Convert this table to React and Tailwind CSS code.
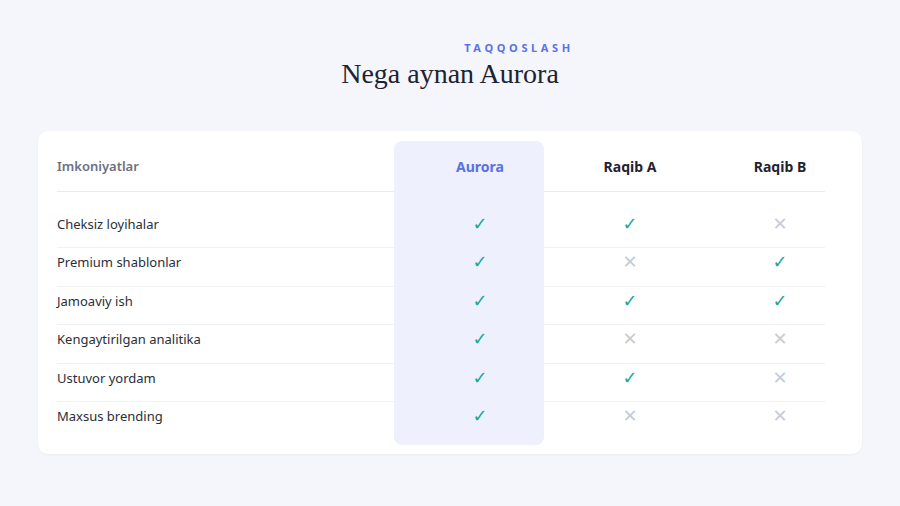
import React from "react";

const rows = [
  ["Cheksiz loyihalar", true, true, false],
  ["Premium shablonlar", true, false, true],
  ["Jamoaviy ish", true, true, true],
  ["Kengaytirilgan analitika", true, false, false],
  ["Ustuvor yordam", true, true, false],
  ["Maxsus brending", true, false, false],
];

function Mark({ ok }) {
  return (
    <div className="w-[150px] flex justify-center">
      {ok ? (
        <span className="text-[#1aa899] text-[18px] leading-[20px] font-['DejaVu_Sans',sans-serif]">✓</span>
      ) : (
        <span className="text-[#c9ccd3] text-[18px] leading-[20px] font-['DejaVu_Sans',sans-serif]">✕</span>
      )}
    </div>
  );
}

export default function App() {
  return (
    <div className="w-[900px] h-[506px] bg-[#f5f6fb] pt-[42px] font-['Noto_Sans',sans-serif] overflow-hidden">
      <div className="flex flex-col items-center">
        <div className="ml-[138px] text-[11px] leading-[12px] font-bold tracking-[0.33em] text-[#5a72e6]">
          TAQQOSLASH
        </div>
        <h1 className="mt-[2px] text-[28px] leading-[36px] text-[#1e2330] font-['Liberation_Serif',serif]">
          Nega aynan Aurora
        </h1>
      </div>
      <div className="ml-[38px] mt-[39px] w-[824px] bg-white rounded-[10px] shadow-[0_1px_3px_rgba(20,30,60,0.04)] pl-[19px] pt-[10px] pb-[9px]">
        <div className="relative w-[768px] pb-[5px]">
          <div className="grid grid-cols-[348px_150px_150px_120px] h-[51px] items-center border-b border-[#e9ebf0]">
            <div className="relative z-10 text-[13px] font-semibold text-[#6b7080] pt-[1px]">Imkoniyatlar</div>
            <div className="relative z-10 w-[150px] text-center text-[14px] font-bold text-[#5a6fe2]">Aurora</div>
            <div className="relative z-10 w-[150px] text-center text-[14px] font-bold text-[#1f2330]">Raqib A</div>
            <div className="relative z-10 w-[150px] text-center text-[14px] font-bold text-[#1f2330]">Raqib B</div>
          </div>
          <div className="mt-[18px]">
            {rows.map((r, i) => (
              <div
                key={r[0]}
                className={
                  "grid grid-cols-[348px_150px_150px_120px] h-[38.4px] pt-[4px] items-start " +
                  (i < rows.length - 1 ? "border-b border-[#f0f1f4]" : "")
                }
              >
                <div className="relative z-10 text-[13px] leading-[20px] text-[#2a2e38]">{r[0]}</div>
                <div className="relative z-10"><Mark ok={r[1]} /></div>
                <div className="relative z-10"><Mark ok={r[2]} /></div>
                <div className="relative z-10"><Mark ok={r[3]} /></div>
              </div>
            ))}
          </div>
          <div className="absolute left-[337px] top-0 bottom-0 w-[150px] rounded-[8px] bg-[#eef0fe]" />
        </div>
      </div>
    </div>
  );
}
